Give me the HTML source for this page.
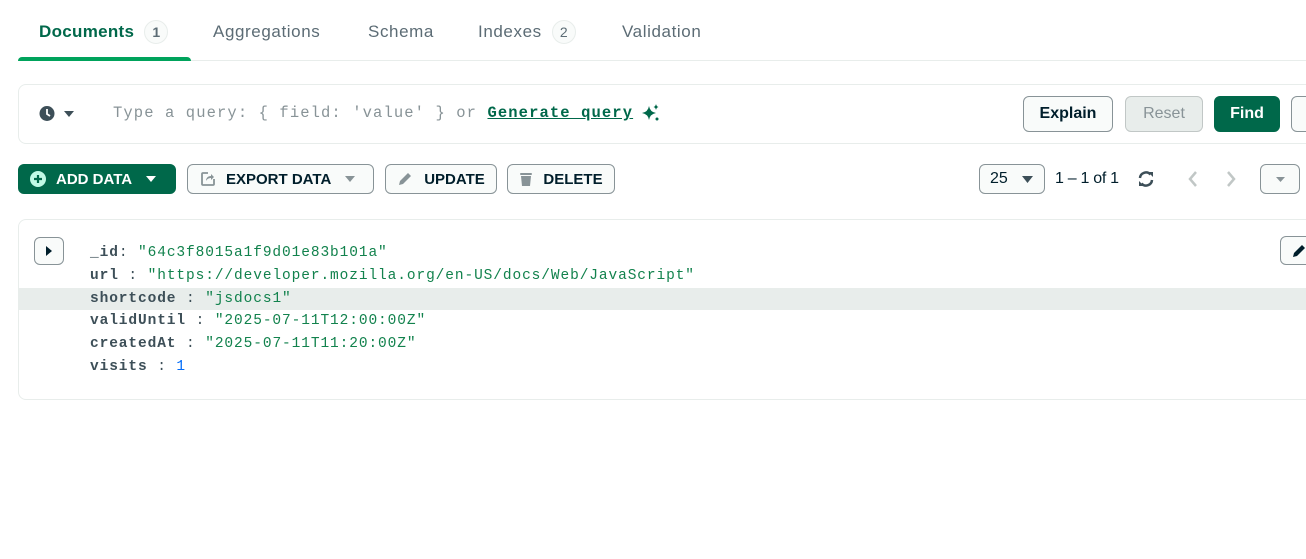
<!DOCTYPE html>
<html><head><meta charset="utf-8"><style>
*{box-sizing:border-box;margin:0;padding:0}
body{width:1306px;height:559px;background:#fff;font-family:"Liberation Sans",sans-serif;position:relative;overflow:hidden;color:#3d4f58}
.a{position:absolute}
.tab{position:absolute;top:20px;font-size:17px;letter-spacing:0.6px;color:#5c6c75;line-height:24px;height:24px;display:flex;align-items:center;white-space:nowrap}
.badge{display:inline-block;width:24px;height:24px;border-radius:12px;background:#f9fbfa;border:1px solid #e8edeb;text-align:center;font-size:14px;line-height:22px;color:#5c6c75;margin-left:10px;letter-spacing:0}
.btn{position:absolute;border:1px solid #889397;border-radius:6px;background:#f9fbfa;font-size:15px;font-weight:bold;color:#001e2b;display:flex;align-items:center;justify-content:center}
.mono{font-family:"Liberation Mono",monospace;font-size:14.5px;letter-spacing:0.9px}
.row{position:absolute;left:90px;height:22.7px;line-height:22.7px;white-space:nowrap}
.k{font-weight:bold;color:#3d4f58}
.s{color:#12824d}
.n{color:#016bf8}
</style></head><body>
<div class="tab" style="left:39px;color:#00684a;font-weight:bold;letter-spacing:0.3px">Documents<span class="badge">1</span></div>
<div class="tab" style="left:213px">Aggregations</div>
<div class="tab" style="left:368px">Schema</div>
<div class="tab" style="left:478px">Indexes<span class="badge">2</span></div>
<div class="tab" style="left:622px">Validation</div>
<div class="a" style="left:18px;top:60px;width:1288px;height:1px;background:#e8edeb"></div>
<div class="a" style="left:18px;top:57px;width:173px;height:4px;background:#00a35c;border-radius:4px 4px 0 0"></div>

<div class="a" style="left:18px;top:84px;width:1300px;height:60px;border:1px solid #e8edeb;border-radius:8px"></div>
<svg class="a" style="left:39px;top:105px" width="40" height="17" viewBox="0 0 40 17"><circle cx="8" cy="8.5" r="7.5" fill="#3d4f58"/><path d="M8 4v5l3 2" stroke="#fff" stroke-width="1.8" fill="none"/><path d="M25 6h10l-5 6z" fill="#3d4f58"/></svg>
<div class="a mono" style="left:113px;top:103px;font-size:15.5px;letter-spacing:1.1px;color:#889397;line-height:20px;white-space:nowrap">Type a query: { field: 'value' } or <span style="color:#00684a;font-weight:bold;text-decoration:underline;letter-spacing:1.1px">Generate query</span></div>
<svg class="a" style="left:641px;top:103px" width="20" height="20" viewBox="0 0 20 20"><path d="M8 3 Q9 9 15 10 Q9 11 8 17 Q7 11 1 10 Q7 9 8 3z" fill="#00684a"/><path d="M15 1 Q15.5 3.5 17.5 4 Q15.5 4.5 15 7 Q14.5 4.5 12.5 4 Q14.5 3.5 15 1z" fill="#00684a"/><circle cx="16" cy="16" r="1.5" fill="#00684a"/></svg>
<div class="btn" style="left:1023px;top:96px;width:90px;height:36px;font-weight:600;font-size:16px">Explain</div>
<div class="btn" style="left:1125px;top:96px;width:78px;height:36px;background:#e8edeb;border-color:#c1c7c6;color:#889397;font-weight:normal;font-size:16px">Reset</div>
<div class="btn" style="left:1214px;top:96px;width:66px;height:36px;background:#00684a;border-color:#00684a;color:#fff;font-size:16px">Find</div>
<div class="btn" style="left:1291px;top:96px;width:40px;height:36px"></div>

<div class="btn" style="left:18px;top:164px;width:158px;height:30px;background:#00684a;border-color:#00684a;color:#fff;justify-content:flex-start;padding-left:11px"><svg width="16" height="16" viewBox="0 0 16 16"><circle cx="8" cy="8" r="8" fill="#c0fae6"/><path d="M8 4v8M4 8h8" stroke="#00684a" stroke-width="2.2"/></svg><span style="margin-left:10px">ADD DATA</span><svg style="margin-left:14px" width="10" height="6"><path d="M0 0h10L5 6z" fill="#fff"/></svg></div>
<div class="btn" style="left:187px;top:164px;width:187px;height:30px;justify-content:flex-start;padding-left:13px"><svg width="14" height="14" viewBox="0 0 14 14"><path d="M7 1H2a1 1 0 0 0-1 1v10a1 1 0 0 0 1 1h10a1 1 0 0 0 1-1V7" stroke="#889397" stroke-width="1.8" fill="none"/><path d="M5 9c0-3 2-5 5-5V2l3 3-3 3V6c-2 0-4 1-5 3z" fill="#889397"/></svg><span style="margin-left:11px">EXPORT DATA</span><svg style="margin-left:14px" width="10" height="6"><path d="M0 0h10L5 6z" fill="#889397"/></svg></div>
<div class="btn" style="left:385px;top:164px;width:112px;height:30px"><svg width="16" height="16" viewBox="0 0 16 16"><path d="M2 14l1-4 8-8 3 3-8 8z" fill="#889397"/></svg><span style="margin-left:11px">UPDATE</span></div>
<div class="btn" style="left:507px;top:164px;width:108px;height:30px"><svg width="14" height="16" viewBox="0 0 14 16"><rect x="1" y="2" width="12" height="2" rx="1" fill="#889397"/><path d="M2 5h10l-1 10H3z" fill="#889397"/></svg><span style="margin-left:10px">DELETE</span></div>

<div class="btn" style="left:979px;top:164px;width:66px;height:30px;font-weight:normal;justify-content:flex-start;padding-left:10px;font-size:16px">25<svg style="margin-left:14px" width="11" height="7"><path d="M0 0h11L5.5 7z" fill="#3d4f58"/></svg></div>
<div class="a" style="left:1055px;top:170px;font-size:16px;color:#001e2b;white-space:nowrap;letter-spacing:-0.3px">1 – 1 of 1</div>
<svg class="a" style="left:1136px;top:169px" width="20" height="20" viewBox="0 0 20 20"><path d="M4 9a6 6 0 0 1 10.5-3.5" stroke="#3d4f58" stroke-width="2.5" fill="none"/><path d="M12 3h5v5z" fill="#3d4f58"/><path d="M16 11a6 6 0 0 1-10.5 3.5" stroke="#3d4f58" stroke-width="2.5" fill="none"/><path d="M8 17H3v-5z" fill="#3d4f58"/></svg>
<svg class="a" style="left:1186px;top:170px" width="14" height="18"><path d="M10 2 4 9l6 7" stroke="#c1c7c6" stroke-width="2.5" fill="none"/></svg>
<svg class="a" style="left:1224px;top:170px" width="14" height="18"><path d="M4 2l6 7-6 7" stroke="#c1c7c6" stroke-width="2.5" fill="none"/></svg>
<div class="btn" style="left:1260px;top:164px;width:40px;height:30px"><svg width="9" height="5"><path d="M0 0h9L4.5 5z" fill="#889397"/></svg></div>

<div class="a" style="left:18px;top:219px;width:1300px;height:181px;border:1px solid #e8edeb;border-radius:8px"></div>
<div class="btn" style="left:34px;top:237px;width:30px;height:28px"><svg width="6" height="10"><path d="M0 0l6 5-6 5z" fill="#001e2b"/></svg></div>
<div class="btn" style="left:1280px;top:236px;width:40px;height:29px;justify-content:flex-start;padding-left:10px"><svg width="16" height="16" viewBox="0 0 16 16"><path d="M2 14l1-4 8-8 3 3-8 8z" fill="#001e2b"/></svg></div>
<div class="a" style="left:19px;top:288px;width:1290px;height:22px;background:#e8edeb"></div>
<div class="mono">
<div class="row" style="top:242px"><span class="k">_id</span>: <span class="s">"64c3f8015a1f9d01e83b101a"</span></div>
<div class="row" style="top:265px"><span class="k">url</span> : <span class="s">"https://developer.mozilla.org/en-US/docs/Web/JavaScript"</span></div>
<div class="row" style="top:288px"><span class="k">shortcode</span> : <span class="s">"jsdocs1"</span></div>
<div class="row" style="top:310px"><span class="k">validUntil</span> : <span class="s">"2025-07-11T12:00:00Z"</span></div>
<div class="row" style="top:333px"><span class="k">createdAt</span> : <span class="s">"2025-07-11T11:20:00Z"</span></div>
<div class="row" style="top:356px"><span class="k">visits</span> : <span class="n">1</span></div>
</div>
</body></html>
